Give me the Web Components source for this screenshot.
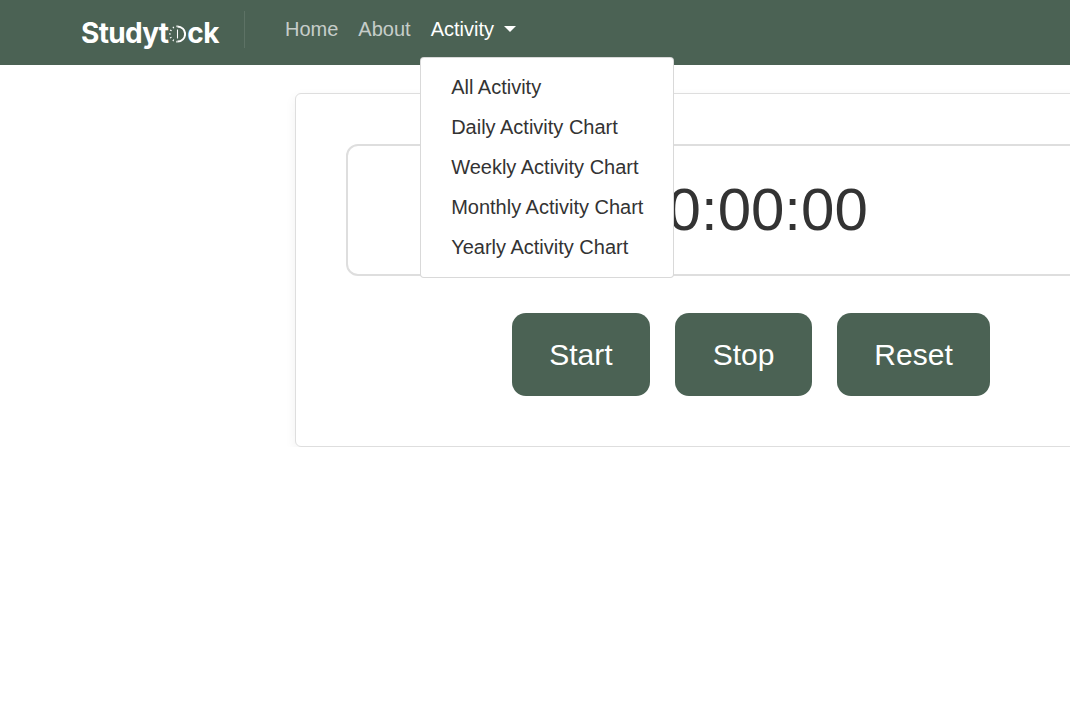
<!DOCTYPE html>
<html>
<head>
<meta charset="utf-8">
<title>Studytock</title>
<style>
  html, body { margin: 0; padding: 0; overflow-x: hidden; background: #fff; }
  body { font-family: "Liberation Sans", Arial, sans-serif; font-size: 20px; color: #333; }
</style>
</head>
<body>
<app-navbar>
  <brand-logo slot="brand"></brand-logo>
  <nav-link slot="links">Home</nav-link>
  <nav-link slot="links">About</nav-link>
  <nav-dropdown slot="links" label="Activity">
    <drop-item>All Activity</drop-item>
    <drop-item>Daily Activity Chart</drop-item>
    <drop-item>Weekly Activity Chart</drop-item>
    <drop-item>Monthly Activity Chart</drop-item>
    <drop-item>Yearly Activity Chart</drop-item>
  </nav-dropdown>
</app-navbar>
<timer-card>
  <timer-display>00:00:00</timer-display>
  <timer-button slot="actions">Start</timer-button>
  <timer-button slot="actions">Stop</timer-button>
  <timer-button slot="actions">Reset</timer-button>
</timer-card>

<script>
class appNavbar extends HTMLElement {
  connectedCallback() {
    this.attachShadow({mode: 'open'});
    this.shadowRoot.innerHTML = `
    <style>
      :host {
        display: flex;
        align-items: center;
        height: 65px;
        padding-left: 81px;
        background: #4b6254;
        position: relative;
        z-index: 2;
      }
      .divider {
        width: 1px;
        height: 37px;
        margin: 11px 40px 0 24px;
        background: rgba(255, 255, 255, .1);
        align-self: flex-start;
      }
      .links { display: flex; align-items: center; gap: 20px; padding-bottom: 8px; }
    </style>
    <slot name="brand"></slot>
    <div class="divider"></div>
    <div class="links"><slot name="links"></slot></div>`;
  }
}

class brandLogo extends HTMLElement {
  connectedCallback() {
    this.attachShadow({mode: 'open'});
    this.shadowRoot.innerHTML = `
    <style>
      :host {
        display: flex;
        align-items: center;
        color: #fff;
        font-family: "Inter", sans-serif;
        font-weight: 700;
        font-size: 28px;
        letter-spacing: -0.7px;
        line-height: 30px;
        width: 139px;
        height: 30px;
      }
      svg { flex: none; margin: 2px 1px 0 1px; }
    </style>
    <span>Studyt</span>
    <svg width="17" height="18" viewBox="0 0 19 20" fill="none" stroke="#fff">
      <path d="M9.5 1.5a8.5 8.5 0 0 1 0 17" stroke-width="2.2"/>
      <path d="M9.5 1.5a8.5 8.5 0 0 0 0 17" stroke-width="2" stroke-dasharray="1.2 3"/>
      <path d="M9.5 5v10" stroke-width="1.2"/>
    </svg>
    <span>ck</span>`;
  }
}

class navLink extends HTMLElement {
  connectedCallback() {
    this.attachShadow({mode: 'open'});
    this.shadowRoot.innerHTML = `
    <style>
      :host {
        display: block;
        color: rgba(255, 255, 255, .7);
        font-size: 20px;
        line-height: 30px;
      }
    </style>
    <slot></slot>`;
  }
}

class navDropdown extends HTMLElement {
  connectedCallback() {
    this.attachShadow({mode: 'open'});
    this.shadowRoot.innerHTML = `
    <style>
      :host {
        display: block;
        position: relative;
        font-size: 20px;
        line-height: 30px;
      }
      .toggle { display: flex; align-items: center; color: #fff; }
      .caret {
        width: 0;
        height: 0;
        margin-left: 10px;
        border-top: 6px solid #fff;
        border-left: 6px solid transparent;
        border-right: 6px solid transparent;
      }
      .menu {
        position: absolute;
        top: 43px;
        left: -10.5px;
        box-sizing: border-box;
        width: 254px;
        padding: 9px 0 10px;
        background: #fff;
        border: 1px solid rgba(0, 0, 0, .15);
        border-radius: 4px;
      }
    </style>
    <div class="toggle">${this.getAttribute('label')}<span class="caret"></span></div>
    <div class="menu"><slot></slot></div>`;
  }
}

class dropItem extends HTMLElement {
  connectedCallback() {
    this.attachShadow({mode: 'open'});
    this.shadowRoot.innerHTML = `
    <style>
      :host {
        display: block;
        padding: 5px 30px;
        color: #333;
        font-size: 20px;
        line-height: 30px;
        white-space: nowrap;
      }
    </style>
    <slot></slot>`;
  }
}

class timerCard extends HTMLElement {
  connectedCallback() {
    this.attachShadow({mode: 'open'});
    this.shadowRoot.innerHTML = `
    <style>
      :host {
        display: block;
        box-sizing: border-box;
        width: 912px;
        margin: 28px 0 0 295px;
        padding: 50px 50px 50px;
        background: #fff;
        border: 1px solid #dedede;
        border-radius: 6px;
        box-shadow: 0 4px 12px rgba(0, 0, 0, .06);
      }
      .actions {
        display: flex;
        justify-content: center;
        gap: 25px;
        margin-top: 37px;
      }
    </style>
    <slot></slot>
    <div class="actions"><slot name="actions"></slot></div>`;
  }
}

class timerDisplay extends HTMLElement {
  connectedCallback() {
    this.attachShadow({mode: 'open'});
    this.shadowRoot.innerHTML = `
    <style>
      :host {
        display: block;
        box-sizing: border-box;
        height: 132px;
        border: 2px solid #dedede;
        border-radius: 12px;
        color: #333;
        font-size: 60px;
        line-height: 128px;
        text-align: center;
      }
    </style>
    <slot></slot>`;
  }
}

class timerButton extends HTMLElement {
  connectedCallback() {
    this.attachShadow({mode: 'open'});
    this.shadowRoot.innerHTML = `
    <style>
      :host {
        display: block;
        box-sizing: border-box;
        height: 83px;
        padding: 0 37.5px;
        background: #4b6254;
        border-radius: 14px;
        color: #fff;
        font-size: 30px;
        line-height: 83px;
      }
    </style>
    <slot></slot>`;
  }
}

customElements.define("app-navbar", appNavbar);
customElements.define("brand-logo", brandLogo);
customElements.define("nav-link", navLink);
customElements.define("nav-dropdown", navDropdown);
customElements.define("drop-item", dropItem);
customElements.define("timer-card", timerCard);
customElements.define("timer-display", timerDisplay);
customElements.define("timer-button", timerButton);
</script>
</body>
</html>
